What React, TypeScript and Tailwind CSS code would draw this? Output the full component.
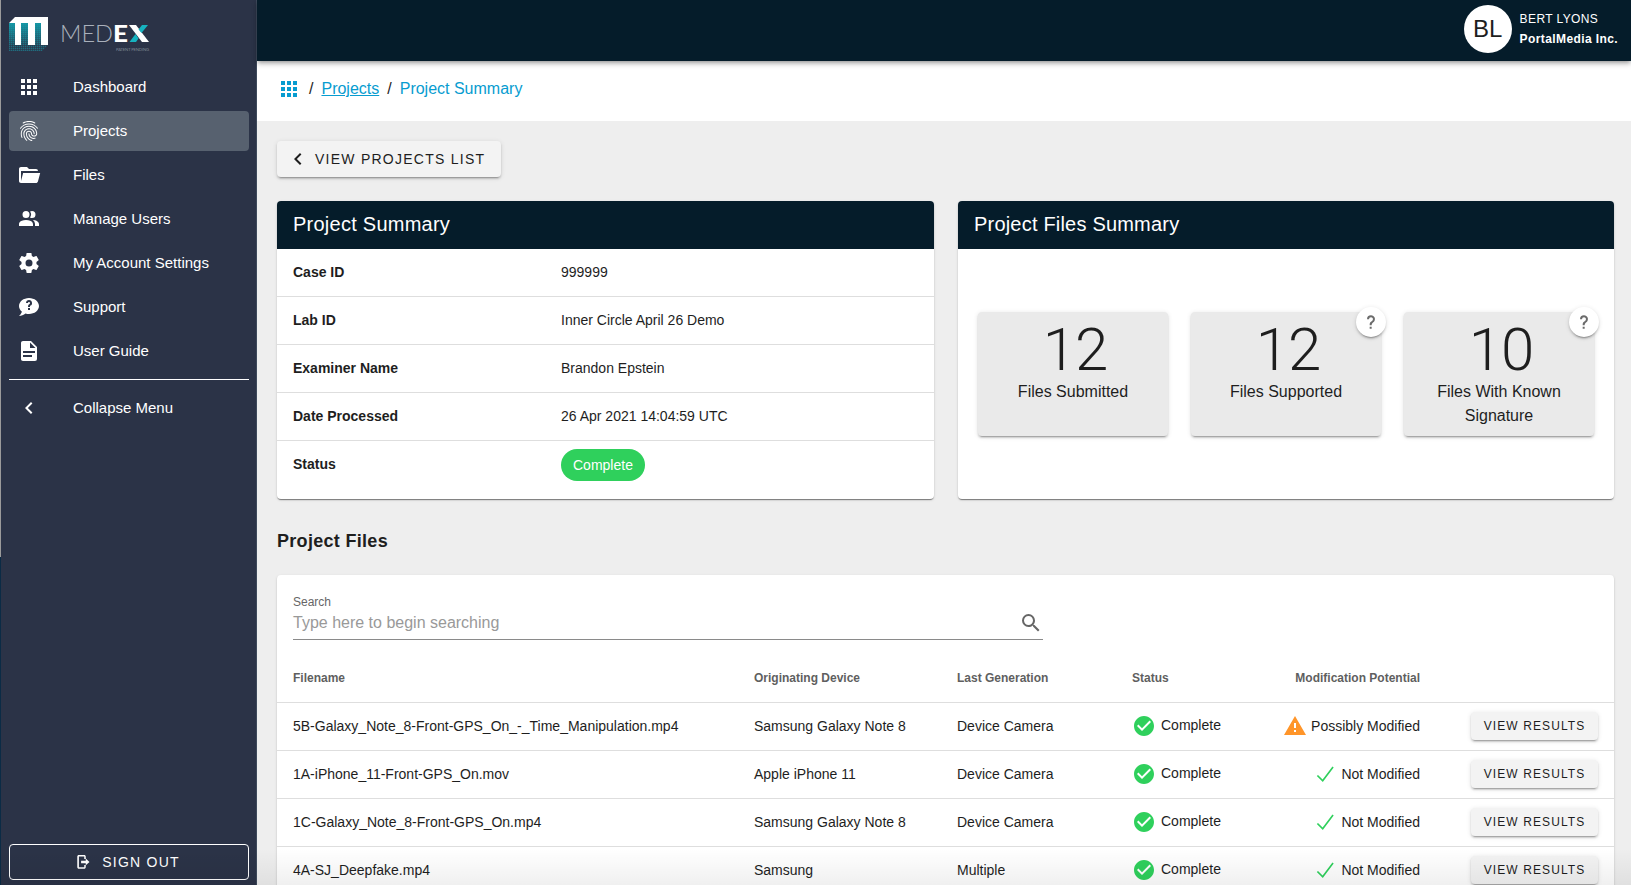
import type { ReactNode } from 'react'
import { MdFingerprint } from 'react-icons/md'

const paths = {
  apps: 'M16,20H20V16H16M16,14H20V10H16M10,8H14V4H10M16,8H20V4H16M10,14H14V10H10M4,14H8V10H4M4,20H8V16H4M10,20H14V16H10M4,8H8V4H4V8Z',
  folderOpen:
    'M19,20H4C2.89,20 2,19.1 2,18V6C2,4.89 2.89,4 4,4H10L12,6H19A2,2 0 0,1 21,8H21L4,8V18L6.14,10H23.21L20.93,18.5C20.7,19.37 19.92,20 19,20Z',
  users:
    'M16 17V19H2V17S2 13 9 13 16 17 16 17M12.5 7.5A3.5 3.5 0 1 0 9 11A3.5 3.5 0 0 0 12.5 7.5M15.94 13A5.32 5.32 0 0 1 18 17V19H22V17S22 13.37 15.94 13M15 4A3.39 3.39 0 0 0 13.07 4.59A5 5 0 0 1 13.07 10.41A3.39 3.39 0 0 0 15 11A3.5 3.5 0 0 0 15 4Z',
  cog: 'M12,15.5A3.5,3.5 0 0,1 8.5,12A3.5,3.5 0 0,1 12,8.5A3.5,3.5 0 0,1 15.5,12A3.5,3.5 0 0,1 12,15.5M19.43,12.97C19.47,12.65 19.5,12.33 19.5,12C19.5,11.67 19.47,11.34 19.43,11L21.54,9.37C21.73,9.22 21.78,8.95 21.66,8.73L19.66,5.27C19.54,5.05 19.27,4.96 19.05,5.05L16.56,6.05C16.04,5.66 15.5,5.32 14.87,5.07L14.5,2.42C14.46,2.18 14.25,2 14,2H10C9.75,2 9.54,2.18 9.5,2.42L9.13,5.07C8.5,5.32 7.96,5.66 7.44,6.05L4.95,5.05C4.73,4.96 4.46,5.05 4.34,5.27L2.34,8.73C2.21,8.95 2.27,9.22 2.46,9.37L4.57,11C4.53,11.34 4.5,11.67 4.5,12C4.5,12.33 4.53,12.65 4.57,12.97L2.46,14.63C2.27,14.78 2.21,15.05 2.34,15.27L4.34,18.73C4.46,18.95 4.73,19.03 4.95,18.95L7.44,17.94C7.96,18.34 8.5,18.68 9.13,18.93L9.5,21.58C9.54,21.82 9.75,22 10,22H14C14.25,22 14.46,21.82 14.5,21.58L14.87,18.93C15.5,18.67 16.04,18.34 16.56,17.94L19.05,18.95C19.27,19.03 19.54,18.95 19.66,18.73L21.66,15.27C21.78,15.05 21.73,14.78 21.54,14.63L19.43,12.97Z',
  chat: 'M12 3C6.5 3 2 6.6 2 11C2 13.2 3.1 15.2 4.8 16.5C4.8 17.1 4.4 18.7 2 21C4.4 20.9 6.6 20 8.5 18.5C9.6 18.9 10.8 19 12 19C17.5 19 22 15.4 22 11S17.5 3 12 3M13 15H11V13H13V15M14.8 9.4C14.5 9.9 14 10.3 13.5 10.6C13.2 10.8 13.1 10.9 13.1 11.1C13 11.3 13 11.5 13 12H11C11 11.1 11.2 10.5 11.4 10.1C11.6 9.8 12 9.5 12.5 9.1C12.8 8.9 13.1 8.4 13.1 8C13 7.4 12.5 7 12 7C11.5 7 11 7.4 11 8H9C9 6.3 10.3 5 12 5S15 6.3 15 8C15 8.5 15 9 14.8 9.4Z',
  document:
    'M13,9H18.5L13,3.5V9M6,2H14L20,8V20A2,2 0 0,1 18,22H6C4.89,22 4,21.1 4,20V4C4,2.89 4.89,2 6,2M15,18V16H6V18H15M18,14V12H6V14H18Z',
  chevronLeft: 'M15.41,16.58L10.83,12L15.41,7.41L14,6L8,12L14,18L15.41,16.58Z',
  help: 'M10,19H13V22H10V19M12,2C17.35,2.22 19.68,7.62 16.5,11.67C15.67,12.67 14.33,13.33 13.67,14.17C13,15 13,16 13,17H10C10,15.33 10,13.92 10.67,12.92C11.33,11.92 12.67,11.33 13.5,10.67C15.92,8.43 15.32,5.26 12,5A3,3 0 0,0 9,8H6A6,6 0 0,1 12,2Z',
  magnify:
    'M9.5,3A6.5,6.5 0 0,1 16,9.5C16,11.11 15.41,12.59 14.44,13.73L14.71,14H15.5L20.5,19L19,20.5L14,15.5V14.71L13.73,14.44C12.59,15.41 11.11,16 9.5,16A6.5,6.5 0 0,1 3,9.5A6.5,6.5 0 0,1 9.5,3M9.5,5C7,5 5,7 5,9.5C5,12 7,14 9.5,14C12,14 14,12 14,9.5C14,7 12,5 9.5,5Z',
  checkCircle:
    'M12 2C6.5 2 2 6.5 2 12S6.5 22 12 22 22 17.5 22 12 17.5 2 12 2M10 17L5 12L6.41 10.59L10 14.17L17.59 6.58L19 8L10 17Z',
  check: 'M20.7,5.4L9.8,20L3.8,14.1L5,12.9L9.6,17.4L19.4,4.4Z',
  alert: 'M13 14H11V9H13M13 18H11V16H13M1 21H23L12 2L1 21Z',
  logout:
    'M3.7 2.7H11C12.1 2.7 13 3.6 13 4.7V8H11V4.7H3.9V19H11V16H13V19C13 20.1 12.1 21 11 21H3.7C2.6 21 1.7 20.1 1.7 19V4.7C1.7 3.6 2.6 2.7 3.7 2.7M6.8 10.3H13V7.4L18 11.9L13 16.4V13.5H6.8Z',
}

type IconName = keyof typeof paths

function Icon({ name, className }: { name: IconName; className: string }) {
  return (
    <svg viewBox="0 0 24 24" fill="currentColor" className={`shrink-0 ${className}`}>
      <path d={paths[name]} />
    </svg>
  )
}

const navItems: { label: string; icon: IconName | 'fingerprint' }[] = [
  { label: 'Dashboard', icon: 'apps' },
  { label: 'Projects', icon: 'fingerprint' },
  { label: 'Files', icon: 'folderOpen' },
  { label: 'Manage Users', icon: 'users' },
  { label: 'My Account Settings', icon: 'cog' },
  { label: 'Support', icon: 'chat' },
  { label: 'User Guide', icon: 'document' },
]

const files = [
  {
    name: '5B-Galaxy_Note_8-Front-GPS_On_-_Time_Manipulation.mp4',
    device: 'Samsung Galaxy Note 8',
    generation: 'Device Camera',
    modified: true,
  },
  { name: '1A-iPhone_11-Front-GPS_On.mov', device: 'Apple iPhone 11', generation: 'Device Camera', modified: false },
  {
    name: '1C-Galaxy_Note_8-Front-GPS_On.mp4',
    device: 'Samsung Galaxy Note 8',
    generation: 'Device Camera',
    modified: false,
  },
  { name: '4A-SJ_Deepfake.mp4', device: 'Samsung', generation: 'Multiple', modified: false },
]

const raised = 'shadow-[0_3px_1px_-2px_rgba(0,0,0,0.2),0_2px_2px_0_rgba(0,0,0,0.14),0_1px_5px_0_rgba(0,0,0,0.12)]'
const card = 'shadow-[0_2px_1px_-1px_rgba(0,0,0,0.3),0_1px_1px_0_rgba(0,0,0,0.2),0_1px_3px_0_rgba(0,0,0,0.12)]'
const columns = 'grid grid-cols-[461px_203px_175px_125px_195px_1fr] items-center px-4'

function Logo() {
  return (
    <svg width="142" height="40" viewBox="0 0 142 40" className="mt-4 ml-2 block">
      <defs>
        <pattern id="dots" width="2" height="2" patternUnits="userSpaceOnUse">
          <rect width="1.4" height="1.4" fill="#16a6b4" />
        </pattern>
        <linearGradient id="shade" x1="0" y1="0" x2="0" y2="1">
          <stop offset="0" stopColor="#13a0ae" stopOpacity="0.9" />
          <stop offset="1" stopColor="#13a0ae" stopOpacity="0.1" />
        </linearGradient>
      </defs>
      <path d="M0 7H39V29L33 35H0Z" fill="url(#dots)" opacity="0.5" />
      <path d="M0 7H6V29H0ZM12 7H19V29H12ZM26 7H32V29H26Z" fill="url(#shade)" />
      <path d="M6 1H39V29H32V7H26V29H19V7H12V29H6V7H0Z" fill="#fff" />
      <text
        x="51"
        y="26"
        fontSize="23.5"
        textLength="53"
        lengthAdjust="spacingAndGlyphs"
        fill="#a9b0bb"
        className="font-[Lato] font-light"
      >
        MED
      </text>
      <text
        x="104"
        y="26"
        fontSize="23.5"
        textLength="15"
        lengthAdjust="spacingAndGlyphs"
        fill="#fff"
        className="font-[Lato] font-black"
      >
        E
      </text>
      <path d="M120 9H127L140 26H133Z" fill="#fff" />
      <path d="M133 9H139L132.500 17L129.500 13.500ZM126.500 18L129.500 22.500L127 26H120.500Z" fill="#17b3c0" />
      <text x="107" y="35" fontSize="4.200" textLength="33" fill="#7f8794" className="font-[Lato]">
        PATENT PENDING
      </text>
    </svg>
  )
}

function Sidebar() {
  return (
    <aside className="flex h-full w-64 shrink-0 flex-col border-r border-[#3e4a5c] bg-[#2b3347] text-white">
      <Logo />
      <nav className="mt-[11px] flex flex-col gap-1 pr-[7px] pl-2 text-[15px]">
        {navItems.map((item) => (
          <a
            key={item.label}
            className={`flex h-10 items-center rounded px-2 ${item.label === 'Projects' ? 'bg-[#57616f]' : ''}`}
          >
            <span className="flex w-14 shrink-0">
              {item.icon === 'fingerprint' ? (
                <MdFingerprint className="size-6" />
              ) : (
                <Icon name={item.icon} className="size-6" />
              )}
            </span>
            <span>{item.label}</span>
          </a>
        ))}
      </nav>
      <div className="mt-2 mr-[7px] ml-2 border-t border-white" />
      <a className="mx-2 mt-2 flex h-10 items-center px-2 text-[15px]">
        <span className="flex w-14 shrink-0">
          <Icon name="chevronLeft" className="size-6" />
        </span>
        Collapse Menu
      </a>
      <button className="mt-auto mr-[7px] mb-[5px] ml-2 flex h-9 items-center justify-center rounded border border-white pr-0.5 text-sm tracking-[1.25px]">
        <Icon name="logout" className="mr-2 size-[18px]" />
        SIGN OUT
      </button>
    </aside>
  )
}

function SummaryRow({ label, children }: { label: string; children: ReactNode }) {
  return (
    <div className="flex h-12 items-center border-b border-[#dedede] px-4 pb-0.5 text-sm last:border-0">
      <div className="w-[268px] font-bold">{label}</div>
      <div>{children}</div>
    </div>
  )
}

function StatCard({ value, label, help }: { value: number; label: string; help?: boolean }) {
  return (
    <div className={`relative h-[124px] rounded bg-[#eaeaea] px-6 text-center ${raised}`}>
      <div className="pt-2 pl-1 font-[Roboto] text-[60px] leading-[60px] font-light tracking-[-1px]">{value}</div>
      <div className="text-base leading-6">{label}</div>
      {help && (
        <div
          className={`absolute -top-[5px] -right-[5px] flex size-[30px] items-center justify-center rounded-full bg-white text-[#6b6b6b] ${raised}`}
        >
          <Icon name="help" className="size-4" />
        </div>
      )}
    </div>
  )
}

export default function App() {
  return (
    <div className="relative flex h-[885px] w-[1631px] overflow-hidden bg-[#eee] font-['Liberation_Sans',Arial,sans-serif] text-[#1e1e1e]">
      <div className="flex w-px shrink-0 flex-col">
        <div className="h-[557px] bg-[#9b9b9b]" />
        <div className="flex-1 bg-[#0b2b45]" />
      </div>
      <Sidebar />
      <div className="flex min-w-0 flex-1 flex-col">
        <header className="z-10 flex h-[61px] shrink-0 items-center justify-end bg-[#051c2a] pr-[13px] pb-[3px] text-white shadow-[0_2px_4px_-1px_rgba(0,0,0,0.3),0_3px_6px_rgba(0,0,0,0.2)]">
          <div className="flex size-12 items-center justify-center rounded-full bg-white text-2xl text-[#1e1e1e]">BL</div>
          <div className="ml-2 text-xs leading-5 tracking-[0.4px]">
            <div>BERT LYONS</div>
            <div className="font-bold">PortalMedia Inc.</div>
          </div>
        </header>
        <div className="flex h-[60px] shrink-0 items-center gap-2 bg-white px-5 pb-1 text-base">
          <Icon name="apps" className="size-6 text-[#079cd0]" />
          <span>/</span>
          <a className="text-[#079cd0] underline">Projects</a>
          <span>/</span>
          <span className="text-[#079cd0]">Project Summary</span>
        </div>

        <main className="pt-5 pl-5">
          <button className={`flex h-9 w-[224px] items-center rounded bg-[#f3f3f3] pl-[9px] text-sm tracking-[1.25px] ${raised}`}>
            <Icon name="chevronLeft" className="mr-[5px] size-6" />
            VIEW PROJECTS LIST
          </button>

          <div className="mt-6 grid grid-cols-[657px_656px] gap-6">
            <section className={`h-[298px] overflow-hidden rounded bg-white ${card}`}>
              <h2 className="flex h-12 items-center bg-[#051c2a] px-4 pb-0.5 text-xl tracking-[0.25px] text-white">
                Project Summary
              </h2>
              <SummaryRow label="Case ID">999999</SummaryRow>
              <SummaryRow label="Lab ID">Inner Circle April 26 Demo</SummaryRow>
              <SummaryRow label="Examiner Name">Brandon Epstein</SummaryRow>
              <SummaryRow label="Date Processed">26 Apr 2021 14:04:59 UTC</SummaryRow>
              <SummaryRow label="Status">
                <span className="mt-0.5 flex h-8 items-center rounded-2xl bg-[#2fd05c] px-3 text-white">Complete</span>
              </SummaryRow>
            </section>
            <section className={`h-[298px] rounded bg-white ${card}`}>
              <h2 className="flex h-12 items-center rounded-t bg-[#051c2a] px-4 pb-0.5 text-xl tracking-[0.2px] text-white">
                Project Files Summary
              </h2>
              <div className="mt-[63px] grid grid-cols-3 gap-[23px] pr-5 pl-5">
                <StatCard value={12} label="Files Submitted" />
                <StatCard value={12} label="Files Supported" help />
                <StatCard value={10} label="Files With Known Signature" help />
              </div>
            </section>
          </div>

          <h3 className="mt-7 text-lg leading-7 font-bold tracking-[0.3px]">Project Files</h3>

          <section className={`mt-5 h-[400px] w-[1337px] rounded bg-white pt-4 ${card}`}>
            <div className="ml-4 w-[750px] border-b border-[#8a8a8a] pb-[3px]">
              <div className="pt-[3px] text-xs leading-4 text-[#666]">Search</div>
              <div className="flex h-[26px] items-center justify-between text-base text-[#999]">
                Type here to begin searching
                <Icon name="magnify" className="size-6 text-[#666]" />
              </div>
            </div>
            <div className={`${columns} mt-[14px] h-[49px] border-b border-[#dedede] pb-px text-xs font-bold text-[#5f5f5f]`}>
              <div>Filename</div>
              <div>Originating Device</div>
              <div>Last Generation</div>
              <div>Status</div>
              <div className="pr-8 text-right">Modification Potential</div>
            </div>
            {files.map((file) => (
              <div key={file.name} className={`${columns} h-12 border-b border-[#dedede] pb-px text-sm`}>
                <div>{file.name}</div>
                <div>{file.device}</div>
                <div>{file.generation}</div>
                <div className="flex items-center gap-[5px]">
                  <Icon name="checkCircle" className="size-6 text-[#2fd05c]" />
                  <span className="-mt-0.5">Complete</span>
                </div>
                <div className="flex items-center justify-end gap-1 pr-8">
                  {file.modified ? (
                    <Icon name="alert" className="size-6 text-[#ff9529]" />
                  ) : (
                    <Icon name="check" className="size-6 text-[#2fd05c]" />
                  )}
                  {file.modified ? 'Possibly Modified' : 'Not Modified'}
                </div>
                <button
                  className={`ml-auto h-7 w-[127px] rounded bg-[#f3f3f3] text-xs tracking-[1.1px] ${raised}`}
                >
                  VIEW RESULTS
                </button>
              </div>
            ))}
          </section>
        </main>
      </div>
      <div className="absolute right-0 bottom-0 left-0 h-9 bg-linear-to-b from-transparent to-black/6" />
    </div>
  )
}
